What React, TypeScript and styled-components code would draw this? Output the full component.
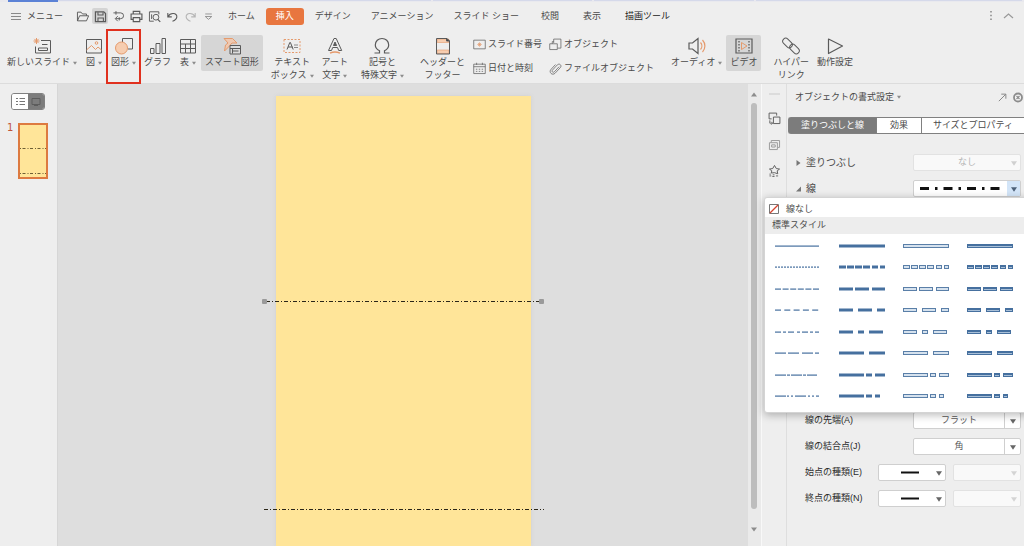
import React from 'react';
import styled, { createGlobalStyle, css } from 'styled-components';

const INK = '#5a5a5a';
const ACCENT = '#e8763f';
const PEACH = '#f6cdb0';
const BLUE = '#46709f';

const GlobalStyle = createGlobalStyle`
  * { box-sizing: border-box; }
  html, body, #root { height: 100%; margin: 0; }
  body {
    overflow: hidden;
    background: #eeeeee;
    color: #4a4a4a;
    font: 9px/13px "Liberation Sans", "Noto Sans CJK JP", sans-serif;
  }
  button, select {
    font: inherit;
    color: inherit;
    margin: 0;
    padding: 0;
    border: 0;
    background: none;
  }
  svg { display: block; }
`;

const Shell = styled.div`
  display: flex;
  flex-direction: column;
  height: 100%;
`;

const WindowTabs = styled.div`
  display: flex;
  height: 2px;
  padding-left: 8px;
  background: #e9e9ee;
`;

const WindowTab = styled.span<{ $active?: boolean; $grow?: number }>`
  flex: ${p => (p.$active ? '0 0 50px' : `${p.$grow ?? 1} 1 0`)};
  height: ${p => (p.$active ? 2 : 1)}px;
  background: ${p => (p.$active ? '#5b82d6' : '#d5d9ea')};
  margin-right: ${p => (p.$active ? 0 : 2)}px;
`;

const MenuBar = styled.nav`
  display: flex;
  align-items: center;
  height: 28px;
  padding: 0 10px;
`;

const MenuButton = styled.button`
  display: flex;
  align-items: center;
  gap: 6px;
  height: 17px;
  margin-right: 11px;
`;

const QuickAccess = styled.div`
  display: flex;
  gap: 2px;
  margin-right: 2px;
`;

const QuickButton = styled.button<{ $active?: boolean }>`
  display: flex;
  align-items: center;
  justify-content: center;
  width: 16px;
  height: 16px;
  border-radius: 2px;
  background: ${p => (p.$active ? '#d4d4d4' : 'transparent')};
`;

const Tab = styled.button<{ $active?: boolean; $wide?: boolean; $strong?: boolean }>`
  height: 17px;
  padding: 0 ${p => (p.$wide ? 12 : 10)}px;
  border-radius: 3px;
  white-space: nowrap;
  ${p => p.$strong && css`color: #222;`}
  ${p => p.$active && css`margin: 0 1px; background: ${ACCENT}; color: #fff;`}
`;

const WindowActions = styled.div`
  display: flex;
  align-items: center;
  gap: 10px;
  margin-left: auto;
`;

const Ribbon = styled.div`
  display: flex;
  align-items: flex-start;
  height: 53px;
  padding: 5px 3px 0;
`;

const Group = styled.div<{ $gap?: number }>`
  display: flex;
  align-items: flex-start;
  margin-left: ${p => p.$gap ?? 0}px;
`;

const ToolButton = styled.button<{ $active?: boolean; $marked?: boolean }>`
  position: relative;
  display: flex;
  flex-direction: column;
  align-items: center;
  min-height: 36px;
  padding: 1px 4px 0;
  border-radius: 2px;
  white-space: nowrap;
  background: ${p => (p.$active ? '#d6d6d6' : 'transparent')};
  ${p => p.$marked && css`
    &::after {
      content: '';
      position: absolute;
      inset: -6px -1px auto;
      height: 51px;
      border: 2px solid #e0301e;
    }
  `}
`;

const ToolIcon = styled.span`
  display: flex;
  align-items: center;
  justify-content: center;
  height: 20px;
`;

const ToolLine = styled.span`
  display: flex;
  align-items: center;
  gap: 3px;
  height: 13px;
`;

const SmallTools = styled.div<{ $gap?: number }>`
  display: flex;
  flex-direction: column;
  gap: 8px;
  padding-top: 1px;
  margin-left: ${p => p.$gap ?? 0}px;
`;

const SmallTool = styled.button`
  display: flex;
  align-items: center;
  gap: 2px;
  height: 16px;
  white-space: nowrap;
`;

const Body = styled.div`
  flex: 1;
  display: flex;
  min-height: 0;
  border-top: 1px solid #dcdcdc;
`;

const Outline = styled.aside`
  flex: 0 0 58px;
  border-right: 1px solid #d6d6d6;
  padding: 9px 8px 0 11px;
`;

const ViewSwitch = styled.div`
  display: flex;
  width: 34px;
  height: 17px;
  border: 1px solid #808080;
  border-radius: 3px;
  overflow: hidden;
`;

const ViewButton = styled.button<{ $active?: boolean }>`
  flex: 1;
  display: flex;
  align-items: center;
  justify-content: center;
  background: ${p => (p.$active ? '#fff' : '#7c7c7c')};
`;

const SlideItem = styled.div`
  display: flex;
  justify-content: space-between;
  margin: 13px 0 0 -4px;
  padding-right: 1px;
  color: #c0553a;
  font: 10px/9px "DejaVu Sans", sans-serif;
`;

const Thumb = styled.button`
  display: block;
  width: 30px;
  height: 56px;
  border: 2px solid #dd7a40;
  background: #ffe599;
`;

const Workspace = styled.main`
  flex: 1;
  display: flex;
  justify-content: center;
  min-width: 0;
  padding: 12px 0 0;
  background: #dedede;
`;

const Slide = styled.div`
  position: relative;
  flex: 0 1 255px;
  background: #ffe599;
  box-shadow: 0 0 4px #cfcfcf;
`;

const ShapeLine = styled.svg<{ $top: number }>`
  position: absolute;
  left: -14px;
  top: ${p => p.$top}px;
  width: calc(100% + 27px);
  height: 6px;
`;

const ScrollBar = styled.div`
  flex: 0 0 14px;
  display: flex;
  flex-direction: column;
  align-items: center;
  padding: 8px 2px 14px 0;
  background: #eaeaea;
  border-right: 1px solid #f8f8f8;
`;

const ScrollThumb = styled.div`
  flex: 1;
  width: 6px;
  margin: 6px 0 18px;
  border-radius: 3px;
  background: #bdbdbd;
`;

const SideBar = styled.div`
  flex: 0 0 25px;
  display: flex;
  flex-direction: column;
  align-items: center;
  gap: 12px;
  padding-top: 9px;
  border-right: 1px solid #dedede;
`;

const Grip = styled.span`
  width: 11px;
  height: 2px;
  margin-bottom: 4px;
  background: #dcdcdc;
`;

const SideButton = styled.button`
  display: block;
  height: 14px;
`;

const Panel = styled.aside`
  flex: 0 0 237px;
  min-width: 0;
  padding-right: 3px;
`;

const PanelHeader = styled.header`
  display: flex;
  align-items: center;
  height: 26px;
  margin-right: -3px;
  padding-left: 8px;
`;

const PanelTitle = styled.button`
  display: flex;
  align-items: center;
  gap: 3px;
  margin-right: auto;
`;

const PanelTabs = styled.div`
  display: flex;
  height: 17px;
  margin: 7px -3px 20px 1px;
  border: 1px solid #808080;
  border-right: 0;
  border-radius: 3px 0 0 3px;
  background: #fff;
`;

const PanelTab = styled.button<{ $width?: number; $active?: boolean }>`
  flex: ${p => (p.$width ? `0 0 ${p.$width}px` : '1')};
  white-space: nowrap;
  line-height: 15px;
  & + & { border-left: 1px solid #808080; }
  ${p => p.$active && css`background: #7c7c7c; color: #fff;`}
`;

const Row = styled.div<{ $below?: boolean }>`
  position: relative;
  display: flex;
  align-items: center;
  height: 17px;
  margin-top: ${p => (p.$below ? 215 : 9)}px;
  padding-left: 18px;
`;

const Disclosure = styled.button`
  display: flex;
  align-items: center;
  gap: 4px;
  margin-left: -10px;
  margin-right: auto;
  font-size: 10px;
`;

const RowLabel = styled.label`
  margin-right: auto;
  color: #2c2c2c;
  white-space: nowrap;
`;

const Field = styled.div<{ $size?: 'half'; $disabled?: boolean; $divided?: boolean }>`
  position: relative;
  width: ${p => (p.$size ? 68 : 108)}px;
  height: 17px;
  margin-left: ${p => (p.$size ? 7 : 0)}px;
  border: 1px solid ${p => (p.$disabled ? '#e2e2e2' : '#cfcfcf')};
  border-radius: 2px;
  background: ${p => (p.$disabled ? '#f9f9f9' : '#fff')};
  color: ${p => (p.$disabled ? '#b4b4b4' : INK)};
  select {
    display: block;
    width: 100%;
    height: 15px;
    appearance: none;
    opacity: 1;
    text-align: center;
    text-align-last: center;
    padding-right: ${p => (p.$divided ? 16 : 0)}px;
  }
`;

const FieldArrow = styled.span<{ $kind?: 'divided' | 'blue' }>`
  position: absolute;
  inset: 0 0 0 auto;
  display: flex;
  align-items: center;
  justify-content: center;
  width: ${p => (p.$kind === 'divided' ? 16 : 13)}px;
  pointer-events: none;
  ${p => p.$kind === 'divided' && css`border-left: 1px solid #cfcfcf;`}
  ${p => p.$kind === 'blue' && css`background: #d3e5f8;`}
`;

const FieldDrawing = styled.svg`
  position: absolute;
  left: 22px;
  top: 6px;
  pointer-events: none;
`;

const DashButton = styled.button`
  display: flex;
  align-items: center;
  width: 100%;
  height: 15px;
  padding-left: 6px;
`;

const Popup = styled.div`
  position: absolute;
  z-index: 2;
  top: 17px;
  left: -23px;
  right: -20px;
  height: 216px;
  padding-top: 3px;
  border: 1px solid #d4d4d4;
  border-radius: 3px;
  background: #fff;
  box-shadow: 0 2px 8px rgba(0, 0, 0, 0.28);
`;

const NoLine = styled.button`
  display: flex;
  align-items: center;
  gap: 6px;
  width: 100%;
  height: 16px;
  padding-left: 3px;
`;

const PopupHeading = styled.h3`
  height: 17px;
  margin: 0;
  padding-left: 7px;
  background: #ededed;
  font: inherit;
  line-height: 17px;
`;

const Styles = styled.div`
  display: grid;
  grid-template-columns: repeat(4, 64px);
  grid-template-rows: repeat(8, 1fr);
  height: 172px;
  margin-top: 1px;
  padding-left: 10px;
`;

const StyleButton = styled.button`
  display: flex;
  align-items: center;
`;

const Caret = ({ color = '#8c8c8c', size = 4 }: { color?: string; size?: number }) => (
  <svg width={size} height={size} viewBox="0 0 8 8" aria-hidden="true">
    <path d="M0 1.500h8L4 7.500z" fill={color} />
  </svg>
);

const Drawing = ({ size = 18, color = INK, children }: { size?: number; color?: string; children: React.ReactNode }) => (
  <svg width={size} height={size} viewBox="0 0 18 18" fill="none" stroke={color} strokeWidth="1" aria-hidden="true">
    {children}
  </svg>
);

const quick: { name: string; active?: boolean; art: React.ReactNode }[] = [
  { name: '開く', art: <path d="M2 15V3h5l2 2.500h5.500V8M2 15l3-7h12.500l-3 7z" strokeWidth="1.300" /> },
  { name: '保存', active: true, art: <><path d="M2 2.500h11.500l2.500 2.500v11H2z" strokeWidth="1.700" /><path d="M5.500 3v4h7V3M5.500 16v-5h7.500v5" strokeWidth="1.500" /></> },
  { name: '出力', art: <path d="M2 4h10a4 4 0 0 1 0 8H5M8 8.500L4.500 12 8 15.500M5.500 1.500v5M10 10v4.500" strokeWidth="1.300" /> },
  { name: '印刷', art: <path d="M4.500 5.500V2h9v3.500M4.500 13H1.500V5.500h15V13h-3M4.500 10.500h9V16h-9z" strokeWidth="1.600" /> },
  { name: '印刷プレビュー', art: <><path d="M8 15.500H2V2.500h13V6M5 6v6.500" strokeWidth="1.300" /><circle cx="11" cy="10" r="4" strokeWidth="1.300" /><path d="M13.500 13l3.500 3.500" strokeWidth="1.700" /></> },
  { name: '元に戻す', art: <path d="M2.500 4v5.500H8M3 9c3-6 12.500-5 12 .5-.3 3-3 5-6 6" strokeWidth="1.500" /> },
  { name: 'やり直し', art: <path d="M15.500 4v5.500H10M15 9C12 3 2.500 4 3 9.500c.3 3 3 5 6 6" stroke="#b5b5b5" strokeWidth="1.500" /> },
  { name: 'カスタマイズ', art: <path d="M4.500 5.500h9M4.500 9h9L9 13z" stroke="#8a8a8a" strokeWidth="1.200" /> },
];

type ToolSpec = { lines: string[]; caret?: boolean; active?: boolean; marked?: boolean; art: React.ReactNode };

const O = '#e59a6c';

const groups: { gap: number; tools: ToolSpec[] }[] = [
  {
    gap: 0,
    tools: [
      { lines: ['新しいスライド'], caret: true, art: <><path d="M8 3.500h9.500v12.500h-15V9.500" /><path d="M5.500 11h9v2.500h-9zM9 7.500h5.500" /><path d="M3.500 1v6M.5 4h6M1.400 1.900l4.200 4.200M5.600 1.900L1.400 6.100" stroke={O} /></> },
      { lines: ['図'], caret: true, art: <><path d="M1.500 2.500h15v13.500h-15z" /><path d="M1.500 13l5-4.500 4 4 2.500-2.500 3.500 3" stroke={O} /><circle cx="11.500" cy="6" r="1.300" stroke={O} /></> },
      { lines: ['図形'], caret: true, marked: true, art: <><path d="M7.500 5V1.500h10v10.500H13" /><circle cx="6.500" cy="11" r="6" fill={PEACH} stroke={O} /></> },
      { lines: ['グラフ'], art: <path d="M1.500 11.500h3.500v5H1.500zM7 6.500h4v10H7zM13 1.500h3.500v15H13z" /> },
      { lines: ['表'], caret: true, art: <><path d="M1.500 2.500h15v13.500h-15z" /><path d="M1.500 7h15M1.500 11.500h15M6.500 7v9M11.500 2.500V16" /></> },
      { lines: ['スマート図形'], active: true, art: <><path d="M1 1.500h8.500L14 6H9l-3.500 4-4 4 1-6L5 6z" fill="#efc9b1" stroke={O} /><path d="M7 8.500h10.500v8.500H7z" fill="#dcdcdc" /><path d="M7 11.500h10.500M9.500 14h6M9.500 11.500v5" /></> },
    ],
  },
  {
    gap: 4,
    tools: [
      { lines: ['テキスト', 'ボックス'], caret: true, art: <><path d="M1 2.500h16v13H1z" stroke={O} strokeDasharray="2 1.500" /><path d="M4 12.500L6.800 5.500h.6l2.800 7M5 10h4.500" /><path d="M11 8h4M11 10.500h4" stroke="#8a8a8a" /></> },
      { lines: ['アート', '文字'], caret: true, art: <><path d="M2.500 13.500L8 1.500h2.200l5.500 12h-3l-1.200-3H6.700l-1.200 3z" /><path d="M7.500 8.500L9 5l1.600 3.500z" fill={INK} /><path d="M4 16.200c3-1.500 7-1.500 10 0" stroke={O} strokeWidth="1.500" /></> },
    ],
  },
  {
    gap: 5,
    tools: [
      { lines: ['記号と', '特殊文字'], caret: true, art: <path d="M1.500 16h5v-2.300C4 12.500 2.300 10.500 2.300 8 2.300 4 5.300 1.500 9 1.500s6.700 2.500 6.700 6.500c0 2.500-1.700 4.500-4.200 5.700V16h5" strokeWidth="1.200" /> },
    ],
  },
  {
    gap: 8,
    tools: [
      { lines: ['ヘッダーと', 'フッター'], art: <><path d="M3.200 2h11.600v3.500H3.200zM3.200 13h11.600v3.500H3.200z" fill={PEACH} stroke={O} strokeWidth=".6" /><path d="M2.500 1.500h10.500l2.500 2.500v13h-13z" /><path d="M12.500 1.500v2.500h3z" fill="#333" /></> },
    ],
  },
];

const tailGroups: { gap: number; tools: ToolSpec[] }[] = [
  {
    gap: 13,
    tools: [
      { lines: ['オーディオ'], caret: true, art: <><path d="M1 6h3.500L10 1.500v15L4.500 12H1z" strokeWidth="1.200" /><path d="M12.500 5.500c1.800 2 1.800 5 0 7M14.500 3c3.200 3.500 3.200 8.500 0 12" stroke={O} strokeWidth="1.200" /></> },
      { lines: ['ビデオ'], active: true, art: <><path d="M1 2h16v14H1z" strokeWidth="1.200" /><path d="M4 4v10.500M14 4v10.500" strokeDasharray="1.500 1.500" strokeWidth="1.300" /><path d="M6.500 5.500v7l5.500-3.500z" stroke={O} /></> },
    ],
  },
  {
    gap: 8,
    tools: [
      { lines: ['ハイパー', 'リンク'], art: <><rect x="0" y="3" width="11" height="6" rx="3" transform="rotate(45 5.500 6)" /><rect x="7" y="9" width="11" height="6" rx="3" transform="rotate(45 12.500 12)" /></> },
      { lines: ['動作設定'], art: <path d="M2.500 2l14 7-14 7.500z" strokeWidth="1.200" strokeLinejoin="round" /> },
    ],
  },
];

function Tool({ lines, caret, active, marked, art }: ToolSpec) {
  return (
    <ToolButton type="button" $active={active} $marked={marked}>
      <ToolIcon><Drawing>{art}</Drawing></ToolIcon>
      {lines.map((line, i) => (
        <ToolLine key={line}>
          {line}
          {caret && i === lines.length - 1 && <Caret />}
        </ToolLine>
      ))}
    </ToolButton>
  );
}

const ToolGroup = ({ gap, tools }: { gap: number; tools: ToolSpec[] }) => (
  <Group $gap={gap}>{tools.map(t => <Tool key={t.lines[0]} {...t} />)}</Group>
);

/* Dash segments as [start, length], one list for thin strokes and one for bars. */
const repeat = (length: number, gap: number, until: number): number[][] => {
  const out: number[][] = [];
  for (let x = 0; x < until - 1; x += length + gap) out.push([x, Math.min(length, until - x)]);
  return out;
};

const dashRows: { thin: number[][]; bar: number[][] }[] = [
  { thin: [[0, 44]], bar: [[0, 46]] },
  { thin: repeat(2, 1, 44), bar: [[0, 7], [8, 7], [16, 7], [24, 7], [33, 6], [41, 5]] },
  { thin: repeat(6, 1.6, 44), bar: [[0, 14], [16, 14], [33, 13]] },
  { thin: repeat(6, 3.3, 44), bar: [[0, 14], [19, 14], [38, 8]] },
  { thin: [[0, 6], [8, 3], [13, 6], [22, 3], [27, 6], [35, 3], [40, 4]], bar: [[0, 14], [19, 6], [30, 14]] },
  { thin: [[0, 11], [13, 11], [27, 11], [40, 4]], bar: [[0, 25], [30, 16]] },
  { thin: [[0, 11], [12, 3], [16, 11], [28, 3], [32, 10]], bar: [[0, 25], [27, 6], [36, 10]] },
  { thin: [[0, 11], [12, 2], [16, 2], [20, 11], [33, 2], [37, 2], [41, 3]], bar: [[0, 25], [27, 6], [36, 5]] },
];

const kinds = ['細線', '太線', '二重線', '太細線'] as const;

function StyleSwatch({ kind, row }: { kind: number; row: number }) {
  const { thin, bar } = dashRows[row];
  return (
    <svg width="46" height="4" viewBox="0 0 46 4" aria-hidden="true">
      {kind === 0 && thin.map(([x, w]) => <rect key={x} x={x} y="1.500" width={w} height="1.200" fill={BLUE} />)}
      {kind === 1 && bar.map(([x, w]) => <rect key={x} x={x} y=".5" width={w} height="3" fill={BLUE} />)}
      {kind > 1 && bar.map(([x, w]) => (
        <g key={x}>
          <rect x={x} y="0" width={w} height="4" fill={kind === 2 ? '#5a7fa8' : BLUE} />
          <rect x={x + 1} y={kind === 2 ? 1 : 2} width={w - 2} height={kind === 2 ? 2 : 1} fill={kind === 2 ? '#d6e2ee' : '#a9c0d8'} />
        </g>
      ))}
    </svg>
  );
}

const menuTabs = [
  { name: 'ホーム' },
  { name: '挿入', active: true },
  { name: 'デザイン' },
  { name: 'アニメーション' },
  { name: 'スライド ショー' },
  { name: '校閲', wide: true },
  { name: '表示', wide: true },
  { name: '描画ツール', wide: true, strong: true },
];

const lineEnds = [
  { id: 'begin-type', label: '始点の種類(E)' },
  { id: 'end-type', label: '終点の種類(N)' },
];

function FormatPanel() {
  return (
    <Panel>
      <PanelHeader>
        <PanelTitle type="button">オブジェクトの書式設定<Caret /></PanelTitle>
        <button type="button" aria-label="切り離す">
          <Drawing size={11} color="#808080"><path d="M3 15L14 4M7 3.500h7.500V11" strokeWidth="1.500" /></Drawing>
        </button>
        <button type="button" aria-label="閉じる">
          <svg width="16" height="11" viewBox="0 0 16 11" aria-hidden="true">
            <circle cx="10" cy="5.500" r="4" fill="#f4f4f4" stroke="#8c8c8c" strokeWidth="1.800" />
            <path d="M8.500 4l3 3M11.500 4l-3 3" stroke="#8c8c8c" strokeWidth="1.200" />
          </svg>
        </button>
      </PanelHeader>
      <PanelTabs>
        <PanelTab type="button" $active $width={87}>塗りつぶしと線</PanelTab>
        <PanelTab type="button" $width={45}>効果</PanelTab>
        <PanelTab type="button">サイズとプロパティ</PanelTab>
      </PanelTabs>
      <Row>
        <Disclosure type="button" id="fill-label" aria-expanded={false}>
          <svg width="7" height="8" viewBox="0 0 7 8" aria-hidden="true"><path d="M1.500 1v6l4-3z" fill="#777" /></svg>
          塗りつぶし
        </Disclosure>
        <Field $disabled>
          <select disabled aria-labelledby="fill-label"><option>なし</option></select>
          <FieldArrow><Caret color="#d0d0d0" size={6} /></FieldArrow>
        </Field>
      </Row>
      <Row>
        <Disclosure type="button" id="line-label" aria-expanded>
          <svg width="7" height="8" viewBox="0 0 7 8" aria-hidden="true"><path d="M6 1.500V6.500H1z" fill="#777" /></svg>
          線
        </Disclosure>
        <Field>
          <DashButton type="button" aria-haspopup="listbox" aria-expanded aria-labelledby="line-label">
            <svg width="80" height="3" viewBox="0 0 80 3" aria-hidden="true">
              <path d="M0 1.500h80" stroke="#111" strokeWidth="3" strokeDasharray="9 6 2.500 6" />
            </svg>
          </DashButton>
          <FieldArrow $kind="blue"><Caret color="#4c6078" size={6} /></FieldArrow>
        </Field>
        <Popup>
          <NoLine type="button">
            <svg width="12" height="12" viewBox="0 0 12 12" aria-hidden="true">
              <path d="M1.500 1.500h9v9h-9z" fill="#fff" stroke="#777" />
              <path d="M2 10L10 2" stroke="#d5432f" strokeWidth="1.200" />
            </svg>
            線なし
          </NoLine>
          <PopupHeading>標準スタイル</PopupHeading>
          <Styles>
            {dashRows.map((_, row) => kinds.map((name, kind) => (
              <StyleButton type="button" key={name} aria-label={`${name} ${row + 1}`}>
                <StyleSwatch kind={kind} row={row} />
              </StyleButton>
            )))}
          </Styles>
        </Popup>
      </Row>
      <Row $below>
        <RowLabel htmlFor="cap">線の先端(A)</RowLabel>
        <Field $divided>
          <select id="cap"><option>フラット</option></select>
          <FieldArrow $kind="divided"><Caret color="#666" size={6} /></FieldArrow>
        </Field>
      </Row>
      <Row>
        <RowLabel htmlFor="join">線の結合点(J)</RowLabel>
        <Field $divided>
          <select id="join"><option>角</option></select>
          <FieldArrow $kind="divided"><Caret color="#666" size={6} /></FieldArrow>
        </Field>
      </Row>
      {lineEnds.map(({ id, label }) => (
        <Row key={id}>
          <RowLabel htmlFor={id}>{label}</RowLabel>
          <Field $size="half">
            <select id={id}><option aria-label="矢印なし" /></select>
            <FieldDrawing width="18" height="3" viewBox="0 0 18 3" aria-hidden="true"><path d="M0 1.500h18" stroke="#111" strokeWidth="2" /></FieldDrawing>
            <FieldArrow><Caret color="#666" size={6} /></FieldArrow>
          </Field>
          <Field $size="half" $disabled>
            <select disabled aria-label={`${label} サイズ`}><option aria-label="なし" /></select>
            <FieldArrow><Caret color="#d4d4d4" size={6} /></FieldArrow>
          </Field>
        </Row>
      ))}
    </Panel>
  );
}

export default function App() {
  return (
    <Shell>
      <GlobalStyle />
      <WindowTabs>
        <WindowTab $active />
        <WindowTab $grow={7} />
        <WindowTab $grow={3} />
        <WindowTab $grow={3} />
        <WindowTab $grow={5} />
      </WindowTabs>
      <MenuBar>
        <MenuButton type="button">
          <svg width="11" height="9" viewBox="0 0 11 9" aria-hidden="true">
            <path d="M1 1.500h10M1 4.500h10M1 7.500h10" stroke="#8a8a8a" />
          </svg>
          メニュー
        </MenuButton>
        <QuickAccess>
          {quick.map(q => (
            <QuickButton type="button" key={q.name} aria-label={q.name} $active={q.active}>
              <Drawing size={13}>{q.art}</Drawing>
            </QuickButton>
          ))}
        </QuickAccess>
        {menuTabs.map(t => (
          <Tab type="button" key={t.name} $active={t.active} $wide={t.wide} $strong={t.strong}>{t.name}</Tab>
        ))}
        <WindowActions>
          <button type="button" aria-label="その他">
            <svg width="4" height="10" viewBox="0 0 4 10" aria-hidden="true">
              <path d="M2 0v10" stroke="#888" strokeWidth="1.500" strokeDasharray="1.500 2.200" />
            </svg>
          </button>
          <button type="button" aria-label="リボンを折りたたむ">
            <svg width="11" height="8" viewBox="0 0 11 8" aria-hidden="true">
              <path d="M1 6l4.500-4L10 6" fill="none" stroke="#999" strokeWidth="1.200" />
            </svg>
          </button>
        </WindowActions>
      </MenuBar>
      <Ribbon>
        {groups.map(g => <ToolGroup key={g.tools[0].lines[0]} {...g} />)}
        <SmallTools $gap={4}>
          <SmallTool type="button">
            <Drawing size={13}><path d="M1 3h16v12H1z" /><path d="M9 6v6M6 9h6M7 7l4 4M11 7l-4 4" stroke={O} /></Drawing>
            スライド番号
          </SmallTool>
          <SmallTool type="button">
            <Drawing size={13}><path d="M1 3h16v13H1zM1 6.500h16M5 1v3M13 1v3" /><path d="M4 10h10M4 13h10" strokeDasharray="2 2" /></Drawing>
            日付と時刻
          </SmallTool>
        </SmallTools>
        <SmallTools $gap={7}>
          <SmallTool type="button">
            <Drawing size={13}><path d="M6.500 7V1.500h10V14H12" /><path d="M1 8h10.500v8H1z" /><path d="M4.500 8v-3h2" /></Drawing>
            オブジェクト
          </SmallTool>
          <SmallTool type="button">
            <Drawing size={13}><path d="M14 6.500l-6.500 7c-2 2-4.500-.5-2.500-2.500l6.500-7c3-3 7 1 4 4l-7 7.500c-4 4-9.500-1.500-5.500-5.500l6-6.500" /></Drawing>
            ファイルオブジェクト
          </SmallTool>
        </SmallTools>
        {tailGroups.map(g => <ToolGroup key={g.tools[0].lines[0]} {...g} />)}
      </Ribbon>
      <Body>
        <Outline>
          <ViewSwitch>
            <ViewButton type="button" $active aria-label="アウトライン">
              <svg width="9" height="7" viewBox="0 0 9 7" aria-hidden="true">
                <path d="M0 .5h2M0 3.500h2M0 6.500h2M3.500 .5H9M3.500 3.500H9M3.500 6.500H9" stroke="#777" />
              </svg>
            </ViewButton>
            <ViewButton type="button" aria-label="スライド">
              <svg width="10" height="8" viewBox="0 0 10 8" aria-hidden="true">
                <path d="M1 .5h8v6H1zM3 7.500h4" fill="none" stroke="#5c5c5c" />
              </svg>
            </ViewButton>
          </ViewSwitch>
          <SlideItem>
            1
            <Thumb type="button" aria-label="スライド 1">
              <svg width="26" height="52" viewBox="0 0 26 52" aria-hidden="true">
                <path d="M0 23.500h26M0 48.500h26" stroke="#6e5f34" strokeWidth="1.200" strokeDasharray="1 1.500 3 2" />
              </svg>
            </Thumb>
          </SlideItem>
        </Outline>
        <Workspace>
          <Slide>
            <ShapeLine $top={202} aria-hidden="true">
              <line x1="4" y1="3.500" x2="100%" y2="3.500" stroke="#2b2618" strokeDasharray="4 2 1 2" />
              <rect x="0" y="1" width="5" height="5" rx="1" fill="#9a9a9a" />
              <svg x="100%" overflow="visible"><rect x="-5" y="1" width="5" height="5" rx="1" fill="#9a9a9a" /></svg>
            </ShapeLine>
            <ShapeLine $top={410} aria-hidden="true">
              <line x1="2" y1="3.500" x2="100%" y2="3.500" stroke="#2b2618" strokeDasharray="4 2 1 2" />
            </ShapeLine>
          </Slide>
        </Workspace>
        <ScrollBar>
          <svg width="6" height="5" viewBox="0 0 6 5" aria-hidden="true"><path d="M0 4.500L3 .5l3 4z" fill="#8c8c8c" /></svg>
          <ScrollThumb />
          <svg width="6" height="5" viewBox="0 0 6 5" aria-hidden="true"><path d="M0 .5h6L3 4.500z" fill="#8c8c8c" /></svg>
        </ScrollBar>
        <SideBar>
          <Grip />
          <SideButton type="button" aria-label="オブジェクト">
            <Drawing size={13}><path d="M5 9.500H1.500V1.500H12V5" strokeWidth="1.300" /><path d="M7.500 7h9v9h-9z" strokeWidth="1.300" /><path d="M2.500 11.500v4H6M4.500 13.500l2 2-2 2" strokeWidth="1.200" /></Drawing>
          </SideButton>
          <SideButton type="button" aria-label="レイアウト">
            <Drawing size={13} color="#999"><path d="M2 6.500h11V16H2zM4.500 6V3.500H16V13h-2.500M5 9.500h5v3H5z" strokeWidth="1.300" /></Drawing>
          </SideButton>
          <SideButton type="button" aria-label="アニメーション">
            <Drawing size={13}><path d="M4.500 12.500l.8-3L2 7l4.500-.7L9 2l2.500 4.300L16 7l-3.300 2.500.8 4-4.500-1.500z" strokeWidth="1.300" /><path d="M2 14l2 0M2 16.500h2.500M6.500 15h2.500M6 17.300h3M11 16.500h3" strokeWidth="1.200" /></Drawing>
          </SideButton>
        </SideBar>
        <FormatPanel />
      </Body>
    </Shell>
  );
}
